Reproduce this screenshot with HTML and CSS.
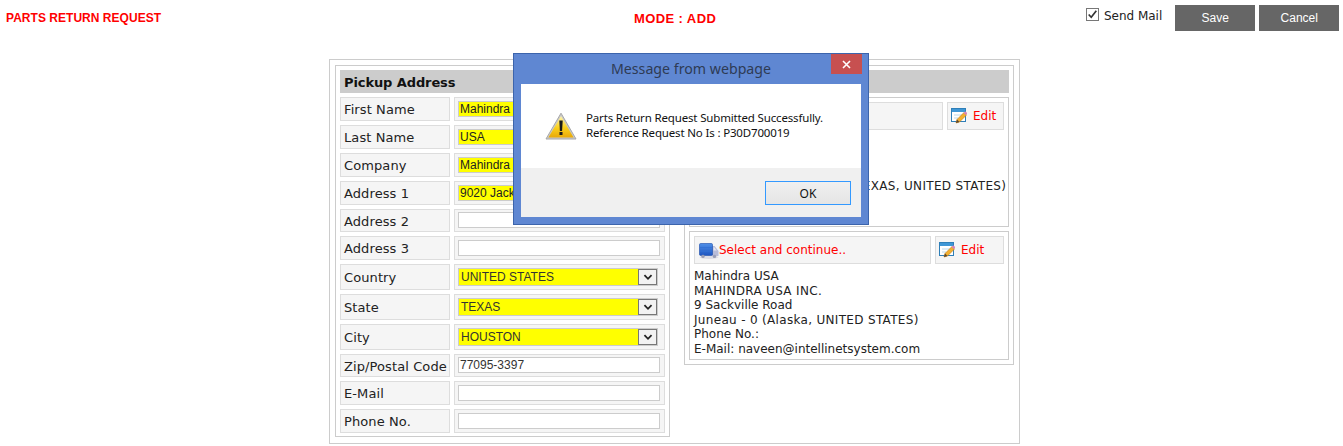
FILE: index.html
```html
<!DOCTYPE html>
<html lang="en">
<head>
<meta charset="utf-8">
<title>Parts Return Request</title>
<link rel="stylesheet" href="styles.css">
</head>
<body>
<svg class="defs" width="0" height="0" aria-hidden="true">
  <defs>
    <linearGradient id="gw" x1="0" y1="0" x2="0" y2="1"><stop offset="0" stop-color="#fff6b0"/><stop offset=".55" stop-color="#fbd01c"/><stop offset="1" stop-color="#e8a808"/></linearGradient>
    <linearGradient id="gt" x1="0" y1="0" x2="0" y2="1"><stop offset="0" stop-color="#4f8fe8"/><stop offset="1" stop-color="#1d55c0"/></linearGradient>
    <symbol id="edit" viewBox="0 0 16 16">
      <rect x=".5" y=".5" width="14" height="13" fill="#fff" stroke="#2f7fb8"/>
      <rect x="1" y="1" width="13" height="3" fill="#3f97d6"/>
      <path d="M3 7h8M3 10h4" stroke="#bcd8ea"/>
      <path d="M5 15l1-3.5 7-7 2.5 2.5-7 7z" fill="#f4b02f" stroke="#b9791a" stroke-width=".6"/>
      <path d="M12.6 4.9l1-1a1 1 0 0 1 1.5 0l.8.8a1 1 0 0 1 0 1.4l-1 1z" fill="#d884b8"/>
      <path d="M5 15l1-3.5 2.5 2.5z" fill="#5a4630"/>
    </symbol>
    <symbol id="truck" viewBox="0 0 20 16">
      <ellipse cx="10" cy="14.3" rx="9.5" ry="1.6" fill="#dcdce4"/>
      <path d="M13 3h2.5L19.5 8v5H13z" fill="#b8bcd8"/>
      <path d="M14.5 4.2h.8l2.4 3.2h-3.2z" fill="#e4e6f2"/>
      <rect x=".5" y=".5" width="13" height="12" rx="1.2" fill="url(#gt)" stroke="#1a49a8" stroke-width=".6"/>
      <path d="M1 4.5h12M1 8.5h12" stroke="#2f6ed2" stroke-width=".7"/>
      <circle cx="4" cy="13.4" r="1.7" fill="#9a9eb6"/>
      <circle cx="15.5" cy="13.4" r="1.7" fill="#9a9eb6"/>
    </symbol>
    <symbol id="chev" viewBox="0 0 18 18">
      <path d="M5 7l4 4 4-4" fill="none" stroke="#222" stroke-width="2"/>
    </symbol>
  </defs>
</svg>

<header class="topbar">
  <h1 class="page-title">PARTS RETURN REQUEST</h1>
  <div class="mode">MODE : ADD</div>
  <div class="actions">
    <label class="send-mail">
      <span class="check"><svg viewBox="0 0 13 13" width="11" height="11"><path d="M2 6.5l3 3.2L11 2" fill="none" stroke="#333" stroke-width="2"/></svg></span>
      <span class="send-text">Send Mail</span>
    </label>
    <button class="btn btn-save" type="button">Save</button>
    <button class="btn" type="button">Cancel</button>
  </div>
</header>

<main class="panel">
  <section class="box box-left">
    <h2 class="box-head">Pickup Address</h2>
    <div class="row"><div class="lbl">First Name</div><div class="val"><input class="inp req" value="Mahindra"></div></div>
    <div class="row"><div class="lbl">Last Name</div><div class="val"><input class="inp req" value="USA"></div></div>
    <div class="row"><div class="lbl">Company</div><div class="val"><input class="inp req" value="Mahindra"></div></div>
    <div class="row"><div class="lbl">Address 1</div><div class="val"><input class="inp req" value="9020 Jackrabbit Road"></div></div>
    <div class="row row-short"><div class="lbl">Address 2</div><div class="val"><input class="inp"></div></div>
    <div class="row"><div class="lbl">Address 3</div><div class="val"><input class="inp"></div></div>
    <div class="row row-tall"><div class="lbl">Country</div><div class="val"><div class="sel"><span class="sel-text">UNITED STATES</span><span class="sel-btn"><svg width="16" height="16"><use href="#chev"/></svg></span></div></div></div>
    <div class="row row-tall"><div class="lbl">State</div><div class="val"><div class="sel"><span class="sel-text">TEXAS</span><span class="sel-btn"><svg width="16" height="16"><use href="#chev"/></svg></span></div></div></div>
    <div class="row row-tall"><div class="lbl">City</div><div class="val"><div class="sel"><span class="sel-text">HOUSTON</span><span class="sel-btn"><svg width="16" height="16"><use href="#chev"/></svg></span></div></div></div>
    <div class="row row-short"><div class="lbl">Zip/Postal Code</div><div class="val"><input class="inp" value="77095-3397"></div></div>
    <div class="row"><div class="lbl">E-Mail</div><div class="val"><input class="inp"></div></div>
    <div class="row row-last"><div class="lbl">Phone No.</div><div class="val"><input class="inp"></div></div>
  </section>

  <section class="box box-right">
    <h2 class="box-head">Return Address</h2>
    <div class="addr">
      <div class="addr-top">
        <div class="pick"><svg class="truck" width="20" height="16"><use href="#truck"/></svg>Select and continue..</div>
        <div class="edit edit-wide"><svg class="edit-ic" width="16" height="16"><use href="#edit"/></svg>Edit</div>
      </div>
      <p class="addr-text">Mahindra USA<br><span class="addr-wide">MAHINDRA USA INC.</span><br>9020 Jackrabbit Road<br><span class="addr-wide">HOUSTON - 77095-3397 (TEXAS, UNITED STATES)</span><br>Phone No.:<br>E-Mail:</p>
    </div>
    <div class="addr addr-b">
      <div class="addr-top">
        <div class="pick"><svg class="truck" width="20" height="16"><use href="#truck"/></svg>Select and continue..</div>
        <div class="edit"><svg class="edit-ic" width="16" height="16"><use href="#edit"/></svg>Edit</div>
      </div>
      <p class="addr-text">Mahindra USA<br><span class="addr-wide">MAHINDRA USA INC.</span><br>9 Sackville Road<br><span class="addr-wide">Juneau - 0 (Alaska, UNITED STATES)</span><br>Phone No.:<br>E-Mail: naveen@intellinetsystem.com</p>
    </div>
  </section>
</main>

<div class="dialog" role="dialog">
  <div class="dlg-title">Message from webpage</div>
  <div class="dlg-close"><svg width="9" height="9" viewBox="0 0 9 9"><path d="M1 1l7 7M8 1L1 8" stroke="#fff" stroke-width="1.6"/></svg></div>
  <div class="dlg-inner">
    <div class="dlg-msg">
      <svg class="warn" width="32" height="28" viewBox="0 0 32 28">
        <path d="M16 1.2L31 27H1z" fill="#c9c9c9" stroke="#a8a8a8"/>
        <path d="M16 4L28.6 25.6H3.4z" fill="url(#gw)"/>
        <path d="M14.3 8.5h3.4l-.6 10.5h-2.2z" fill="#1b1b1b"/>
        <rect x="14.5" y="20" width="3" height="3" fill="#1b1b1b"/>
      </svg>
      <p class="dlg-text">Parts Return Request Submitted Successfully.<br>Reference Request No Is : P30D700019</p>
    </div>
    <div class="dlg-foot"><button class="dlg-ok" type="button">OK</button></div>
  </div>
</div>
</body>
</html>
```
FILE: styles.css
```css
* { box-sizing: border-box; }
html, body { margin: 0; padding: 0; height: 446px; overflow: hidden; background: #fff; }
body { position: relative; font-family: "DejaVu Sans", Verdana, sans-serif; font-size: 13px; color: #222; }
.defs { position: absolute; }

.topbar { display: flex; align-items: flex-start; height: 59px; padding: 5px 4px 0 6px; }
.page-title { flex: none; margin: 6px 0 0; width: 628px; font: bold 12px/14px "Liberation Sans", Arial, sans-serif; color: #f00; letter-spacing: .03px; }
.mode { flex: none; margin-top: 7px; width: 452px; font: bold 13px/14px "Liberation Sans", Arial, sans-serif; color: #f00; letter-spacing: .4px; }
.actions { flex: none; display: flex; align-items: flex-start; gap: 4px; }
.send-mail { display: flex; align-items: center; gap: 5px; margin-right: 9px; height: 22px; font-size: 12px; color: #222; white-space: nowrap; }
.check { flex: none; display: flex; align-items: center; justify-content: center; width: 13px; height: 13px; margin-top: -3px; border: 1px solid #777; background: #fff; }
.send-text { letter-spacing: -.02px; }
.btn { flex: none; width: 80px; height: 26px; border: 0; padding: 0; background: #666; color: #fff; font: 12px "Liberation Sans", Arial, sans-serif; }

.panel { display: flex; align-items: flex-start; gap: 14px; width: 691px; height: 385px; margin-left: 329px; padding: 5px; border: 1px solid #ccc; }
.box { border: 1px solid #ccc; padding: 4px; }
.box-left { width: 335px; height: 372px; }
.box-right { width: 330px; height: 300px; }
.box-head { margin: 0 0 4px; height: 23px; padding-left: 4px; background: #ccc; color: #111; font-size: 13px; font-weight: bold; line-height: 25px; letter-spacing: -.1px; }

.row { display: flex; gap: 4px; height: 24px; margin-bottom: 4px; }
.row-short { height: 23px; }
.row-tall { height: 26px; }
.row-last { margin-bottom: 0; }
.lbl, .val { border: 1px solid #ddd; background: #f5f5f5; }
.lbl { display: flex; align-items: center; width: 110px; padding-left: 3px; white-space: nowrap; letter-spacing: .1px; }
.row-short .lbl { padding-top: 2px; }
.val { display: flex; align-items: center; width: 211px; padding: 0 4px 1px 3px; }
.inp { display: block; width: 202px; height: 16px; margin: 0; padding: 0 1px 0; border: 1px solid #ccc; border-radius: 0; outline: 0; background: #fff; color: #333; font: 12px "Liberation Sans", Arial, sans-serif; }
.inp.req { background: #ff0; color: #222; }
.sel { display: flex; width: 200px; height: 18px; border: 1px solid #ccc; background: #ff0; }
.sel-text { flex: 1; padding: 1px 0 0 2px; font: 12px/14px "Liberation Sans", Arial, sans-serif; color: #333; }
.sel-btn { display: flex; align-items: center; justify-content: center; width: 19px; border: 1px solid #777; background: #f2f2f2; margin: 0 0 0 auto; }

.addr { height: 130px; border: 1px solid #ccc; padding: 4px; }
.addr-b { height: 129px; margin-top: 4px; }
.addr-top { display: flex; gap: 4px; height: 28px; }
.pick, .edit { display: flex; align-items: center; border: 1px solid #ddd; background: #f5f5f5; color: #f00; font-size: 12px; }
.pick { flex: 1; padding-left: 4px; }
.truck { flex: none; margin-top: 1px; }
.edit { width: 69px; padding-left: 3px; }
.edit-wide { width: 57px; }
.edit-ic { flex: none; margin-right: 6px; }
.addr-text { margin: 5px 0 0; font-size: 12px; line-height: 14.6px; white-space: nowrap; color: #222; }
.addr-wide { letter-spacing: .32px; }

.dialog { position: absolute; left: 513px; top: 53px; width: 356px; height: 172px; border: 1px solid #3c64ac; background: #5f87d2; }
.dlg-title { height: 30px; text-align: center; padding-top: 5px; font: 14.2px/20px "Noto Sans", sans-serif; color: #2e3b55; }
.dlg-close { position: absolute; right: 6px; top: 0; display: flex; align-items: center; justify-content: center; width: 31px; height: 20px; background: #c75050; }
.dlg-inner { margin: 0 7px; height: 133px; background: #f0f0f0; }
.dlg-msg { display: flex; height: 84px; background: #fff; padding: 28px 0 0 24px; }
.warn { flex: none; margin: 0 9px 0 0; }
.dlg-text { margin: -2px 0 0; font: 11.5px/15px "Noto Sans", sans-serif; letter-spacing: -.16px; color: #111; }
.dlg-foot { display: flex; justify-content: flex-end; padding: 13px 10px 0 0; }
.dlg-ok { width: 86px; height: 24px; padding: 0; border: 1px solid #3399ff; background: linear-gradient(#f0f0f0, #e5e5e5); font: 12px "Noto Sans", sans-serif; color: #111; }
```
